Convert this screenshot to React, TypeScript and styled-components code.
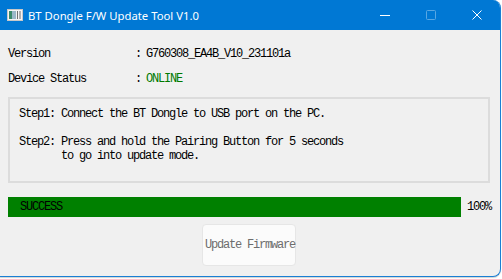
import React from "react";
import styled, { createGlobalStyle } from "styled-components";

const Global = createGlobalStyle`
  html, body { margin: 0; padding: 0; background: #ffffff; }
  body { width: 502px; height: 279px; overflow: hidden; }
`;

const Window = styled.div`
  width: 500px;
  height: 276px;
  background: #f0f0f0;
  border-right: 1px solid #1a7fd4;
  border-bottom: 1px solid #1a7fd4;
  border-radius: 0 8px 8px 0;
  overflow: hidden;
  display: flex;
  flex-direction: column;
  box-shadow: 0 1px 1px rgba(0, 0, 0, 0.18);
`;

const TitleBar = styled.div`
  height: 30px;
  flex: none;
  background: #0078d4;
  display: flex;
  align-items: center;
  padding-left: 7px;
  color: #ffffff;
  font-family: "Noto Sans", "Open Sans", sans-serif;
  font-size: 11.3px;
`;

const AppIcon = styled.svg`
  width: 16px;
  height: 12px;
  margin-right: 5px;
  flex: none;
`;

const Title = styled.span`
  flex: 1;
  white-space: nowrap;
`;

const Controls = styled.div`
  display: flex;
  height: 30px;
`;

const CtrlButton = styled.div<{ $dim?: boolean }>`
  width: 46px;
  height: 30px;
  display: flex;
  align-items: center;
  justify-content: center;
  opacity: ${(p) => (p.$dim ? 0.35 : 1)};
`;

const Body = styled.div`
  flex: 1;
  padding: 17px 8px 0 8px;
  display: flex;
  flex-direction: column;
  font-family: "Liberation Mono", "Courier New", monospace;
  font-size: 12px;
  letter-spacing: -1.2px;
  color: #000000;
`;

const InfoRow = styled.div`
  display: grid;
  grid-template-columns: 127px 11px 1fr;
  height: 14px;
  line-height: 14px;
  margin-bottom: 11px;
  white-space: pre;
`;

const Value = styled.span<{ $color?: string }>`
  color: ${(p) => p.$color || "#000000"};
`;

const Group = styled.div`
  width: 482px;
  height: 86px;
  box-sizing: border-box;
  border: 2px solid #dcdcdc;
  padding: 8px 0 0 9px;
  white-space: pre;
  line-height: 14px;
`;

const ProgressRow = styled.div`
  display: flex;
  align-items: center;
  margin-top: 14px;
  height: 20px;
`;

const ProgressTrack = styled.div`
  width: 453px;
  height: 20px;
  background: #e6e6e6;
`;

const ProgressFill = styled.div`
  height: 100%;
  background: #008000;
  display: flex;
  align-items: center;
  padding-left: 12px;
  box-sizing: border-box;
`;

const Percent = styled.span`
  margin-left: 6px;
`;

const ButtonRow = styled.div`
  display: flex;
  padding-left: 194px;
  margin-top: 7px;
`;

const FwButton = styled.button`
  width: 94px;
  height: 42px;
  background: #fbfbfb;
  border: 1px solid #e6e6e6;
  border-radius: 4px;
  padding: 0 0 0 2px;
  font-family: "Liberation Mono", "Courier New", monospace;
  font-size: 12px;
  letter-spacing: -1.2px;
  color: #6d6d6d;
  text-align: left;
  white-space: nowrap;
`;

export default function App() {
  const progress = 100;
  return (
    <>
      <Global />
      <Window>
        <TitleBar>
          <AppIcon viewBox="0 0 16 12">
            <rect x="0.5" y="0.5" width="15" height="11" fill="#f4f4f4" stroke="#c8c8c8" />
            <rect x="2" y="2" width="3" height="8" fill="#3a8a6a" />
            <rect x="5" y="2" width="4" height="8" fill="#9ab8c8" />
            <rect x="10" y="2" width="1" height="8" fill="#707070" />
            <rect x="12" y="2" width="2" height="8" fill="#b0b0b0" />
          </AppIcon>
          <Title>BT Dongle F/W Update Tool V1.0</Title>
          <Controls>
            <CtrlButton>
              <svg width="10" height="10" viewBox="0 0 10 10">
                <line x1="0" y1="5.5" x2="10" y2="5.5" stroke="#fff" strokeWidth="1" />
              </svg>
            </CtrlButton>
            <CtrlButton $dim>
              <svg width="10" height="10" viewBox="0 0 10 10">
                <rect x="0.5" y="0.5" width="9" height="9" fill="none" stroke="#fff" strokeWidth="1" rx="1" />
              </svg>
            </CtrlButton>
            <CtrlButton>
              <svg width="10" height="10" viewBox="0 0 10 10">
                <path d="M0.5 0.5 L9.5 9.5 M9.5 0.5 L0.5 9.5" stroke="#fff" strokeWidth="1" />
              </svg>
            </CtrlButton>
          </Controls>
        </TitleBar>
        <Body>
          <InfoRow>
            <span>Version</span>
            <span>:</span>
            <Value>G760308_EA4B_V10_231101a</Value>
          </InfoRow>
          <InfoRow>
            <span>Device Status</span>
            <span>:</span>
            <Value $color="#007a00">ONLINE</Value>
          </InfoRow>
          <Group>
            {"Step1: Connect the BT Dongle to USB port on the PC.\n\nStep2: Press and hold the Pairing Button for 5 seconds\n       to go into update mode."}
          </Group>
          <ProgressRow>
            <ProgressTrack>
              <ProgressFill style={{ width: `${progress}%` }}>SUCCESS</ProgressFill>
            </ProgressTrack>
            <Percent>{progress}%</Percent>
          </ProgressRow>
          <ButtonRow>
            <FwButton disabled>Update Firmware</FwButton>
          </ButtonRow>
        </Body>
      </Window>
    </>
  );
}
